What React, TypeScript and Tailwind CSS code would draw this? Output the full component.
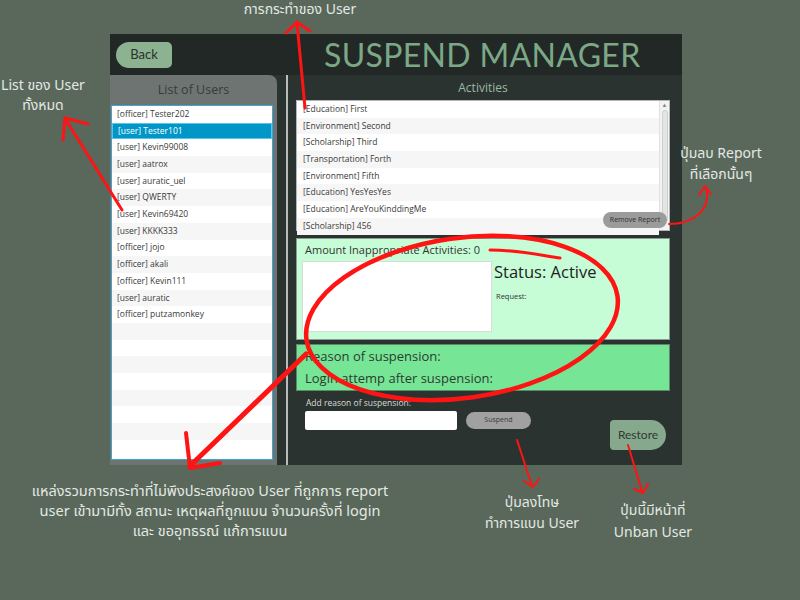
import React from 'react';

const users = [
  '[officer] Tester202',
  '[user] Tester101',
  '[user] Kevin99008',
  '[user] aatrox',
  '[user] auratic_uel',
  '[user] QWERTY',
  '[user] Kevin69420',
  '[user] KKKK333',
  '[officer] jojo',
  '[officer] akali',
  '[officer] Kevin111',
  '[user] auratic',
  '[officer] putzamonkey',
];

const activities = [
  '[Education] First',
  '[Environment] Second',
  '[Scholarship] Third',
  '[Transportation] Forth',
  '[Environment] Fifth',
  '[Education] YesYesYes',
  '[Education] AreYouKinddingMe',
  '[Scholarship] 456',
];

const ui = { fontFamily: '"Open Sans", "Noto Sans", sans-serif' };
const note = { fontFamily: '"Noto Sans", "Noto Sans Thai", "Open Sans", sans-serif' };

const Row = ({ text, i, selected, wide }: { text?: string; i: number; selected?: boolean; wide?: boolean }) => (
  <div
    className={
      (wide ? 'pl-[6px] ' : 'pl-[5px] ') +
      (selected
        ? 'h-[16.7px] shrink-0 flex items-center text-[8.5px] text-white bg-[#0097c8] border border-[#5cc3ea]'
        : i % 2
        ? 'h-[16.7px] shrink-0 flex items-center text-[8.5px] text-[#3a3a3a] bg-[#f6f6f6]'
        : 'h-[16.7px] shrink-0 flex items-center text-[8.5px] text-[#3a3a3a] bg-white')
    }
  >
    {text}
  </div>
);

const Annotations = () => (
  <div className="absolute inset-0 pointer-events-none text-[#e4e9e4] text-[14px] leading-[20px]" style={note}>
    <div className="absolute left-[200px] top-[-1px] w-[200px] text-center">การกระทำของ User</div>
    <div className="absolute left-[-20px] top-[75px] w-[126px] text-center">
      List ของ User
      <br />
      ทั้งหมด
    </div>
    <div className="absolute left-[660px] top-[142px] w-[122px] text-center leading-[21px]">
      ปุ่มลบ Report
      <br />
      ที่เลือกนั้นๆ
    </div>
    <div className="absolute left-[0px] top-[480px] w-[420px] text-center text-[14.5px]">
      แหล่งรวมการกระทำที่ไม่พึงประสงค์ของ User ที่ถูกการ report
      <br />
      user เข้ามามีทั้ง สถานะ เหตุผลที่ถูกแบน จำนวนครั้งที่ login
      <br />
      และ ขออุทธรณ์ แก้การแบน
    </div>
    <div className="absolute left-[472px] top-[491px] w-[120px] text-center leading-[21px]">
      ปุ่มลงโทษ
      <br />
      ทำการแบน User
    </div>
    <div className="absolute left-[593px] top-[499px] w-[120px] text-center leading-[22px]">
      ปุ่มนี้มีหน้าที่
      <br />
      Unban User
    </div>
    <svg className="absolute inset-0" width="800" height="600" viewBox="0 0 800 600" fill="none" stroke="#ff1414" strokeLinecap="round" strokeLinejoin="round">
      {/* activities arrow */}
      <path d="M305 108 L297 23" strokeWidth="3" />
      <path d="M286 33 L297 22 L310 31" strokeWidth="3" />
      {/* user list arrow */}
      <path d="M122 210 L66 120" strokeWidth="3" />
      <path d="M63 140 L65 118 L88 124" strokeWidth="3" />
      {/* remove report arrow */}
      <path d="M669 224 C690 224 712 212 706 188" strokeWidth="2" />
      <path d="M699 195 L705 186 L711 194" strokeWidth="2" />
      {/* ellipse */}
      <ellipse cx="462" cy="318" rx="157" ry="80" transform="rotate(-8 462 318)" strokeWidth="4.5" />
      <path d="M490 250 C520 250 545 256 560 258" strokeWidth="3" />
      {/* big arrow */}
      <path d="M306 354 L190 466" strokeWidth="5" />
      <path d="M186 433 L190 468 L220 463" strokeWidth="4" />
      {/* suspend arrow */}
      <path d="M517 440 L532 486" strokeWidth="2" />
      <path d="M524 481 L533 487 L539 479" strokeWidth="2" />
      {/* restore arrow */}
      <path d="M628 445 L642 491" strokeWidth="2" />
      <path d="M634 489 L643 493 L648 484" strokeWidth="2" />
    </svg>
  </div>
);

export default function App() {
  return (
    <div className="relative w-[800px] h-[600px] bg-[#59685b] overflow-hidden" style={ui}>
      <div className="ml-[110px] pt-[34px] w-[572px]">
        {/* header */}
        <div className="h-[41px] bg-[#212826] flex items-center">
          <button className="ml-[6px] w-[56px] h-[26px] rounded-l-[13px] rounded-r-[5px] bg-[#8db292] text-[#263229] text-[13px] flex items-center justify-center" style={{ fontFamily: 'Lato, sans-serif' }}>
            Back
          </button>
          <div className="ml-[152px] text-[#7ca886] text-[32px] leading-none tracking-[0.01em]" style={{ fontFamily: 'Lato, sans-serif' }}>
            SUSPEND MANAGER
          </div>
        </div>
        {/* body */}
        <div className="h-[390px] bg-[#2b3331] flex">
          <div className="w-[167px] bg-[#6d7472] rounded-tr-[8px] flex flex-col">
            <div className="h-[30px] flex items-center justify-center text-[12.5px] text-[#363c3a]">List of Users</div>
            <div className="ml-[1px] w-[162px] h-[355px] border border-[#3ea6d6] bg-white flex flex-col overflow-hidden">
              {users.map((u, i) => (
                <Row key={u} text={u} i={i} selected={i === 1} />
              ))}
              {Array.from({ length: 8 }).map((_, i) => (
                <Row key={'e' + i} i={i + users.length} />
              ))}
            </div>
          </div>
          <div className="ml-[9px] w-[2px] bg-[#b9bcbb]" />
          <div className="ml-[8px] w-[374px] flex flex-col">
            <div className="h-[25px] flex items-center justify-center text-[12px] text-[#9db7a5]">Activities</div>
            <div className="relative h-[131px] border border-[#b5b5b5] bg-white flex">
              <div className="flex-1 flex flex-col">
                {activities.map((a, i) => (
                  <Row key={a} text={a} i={i} wide />
                ))}
              </div>
              <div className="w-[10px] bg-[#f3f3f3] border-l border-[#e0e0e0] flex flex-col items-center">
                <span className="text-[6px] leading-[8px] text-[#888]">▲</span>
                <div className="mt-[1px] w-[6px] h-[112px] rounded-[3px] bg-[#e4e4e4] border border-[#cfcfcf]" />
              </div>
              <button className="absolute right-[2px] bottom-[2px] w-[64px] h-[16px] rounded-full bg-[#9b9b9b] text-[7px] text-[#2d2d2d]">
                Remove Report
              </button>
            </div>
            <div className="mt-[7px] h-[102px] bg-[#c6fdd6] border border-[#8a9a90] flex flex-col">
              <div className="h-[22px] pl-[8px] pt-[3px] text-[11px] text-[#333]">Amount Inappropriate Activities: 0</div>
              <div className="flex">
                <div className="ml-[5px] w-[190px] h-[71px] bg-white border border-[#dadada]" />
                <div className="ml-[2px] flex flex-col">
                  <div className="text-[16.5px] leading-[22px] text-[#222]">Status: Active</div>
                  <div className="ml-[2px] mt-[8px] text-[7.5px] text-[#333]">Request:</div>
                </div>
              </div>
            </div>
            <div className="mt-[4px] h-[47px] bg-[#76e596] border border-[#5b8a68] pl-[8px] flex flex-col justify-center text-[13px] leading-[22px] text-[#2e3b31]">
              <div className="-mt-[2px]">Reason of suspension:</div>
              <div>Login attemp after suspension:</div>
            </div>
            <div className="flex">
              <div className="flex flex-col">
                <div className="ml-[10px] mt-[6px] text-[8.5px] leading-[12px] text-[#d8dcd9]">Add reason of suspension:</div>
                <div className="flex items-center mt-[2px]">
                  <div className="ml-[9px] w-[152px] h-[19px] bg-white rounded-[2px]" />
                  <button className="ml-[9px] w-[65px] h-[17px] rounded-full bg-[#a1a1a1] text-[7px] text-[#3b3b3b]">Suspend</button>
                </div>
              </div>
              <button className="ml-[79px] mt-[29px] w-[56px] h-[30px] rounded-l-[4px] rounded-r-[15px] bg-[#86a88c] text-[12px] text-[#2f3a31]" style={{ fontFamily: 'Lato, sans-serif' }}>
                Restore
              </button>
            </div>
          </div>
        </div>
      </div>
      <Annotations />
    </div>
  );
}
